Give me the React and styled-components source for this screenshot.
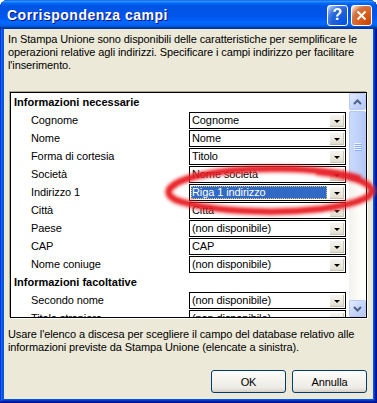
import React from 'react';
import styled, { createGlobalStyle } from 'styled-components';

const GlobalStyle = createGlobalStyle`
  html, body { margin: 0; padding: 0; background: #ffffff; }
  body {
    width: 377px; height: 403px; overflow: hidden;
    font-family: "Liberation Sans", Arial, sans-serif;
    font-size: 11px; color: #000;
  }
  * { box-sizing: border-box; }
`;

const Window = styled.div`
  position: relative;
  width: 377px;
  height: 403px;
  display: flex;
  flex-direction: column;
  border-radius: 8px 8px 0 0;
  overflow: hidden;
  background: #0055e5;
  box-shadow: inset -1px -1px #00138c, inset 1px 1px #0831d9,
    inset -2px -2px #001ea0, inset 2px 2px #166aee,
    inset -3px -3px #003bda, inset 3px 3px #0855dd;
`;

const TitleBar = styled.div`
  height: 29px;
  flex: none;
  display: flex;
  align-items: center;
  padding: 0 5px 0 7px;
  background: linear-gradient(180deg, #0058ee 0%, #3593ff 4%, #288eff 6%, #127dff 8%,
    #036ffc 10%, #0262ee 14%, #0057e5 20%, #0054e3 24%, #0055eb 56%, #005bf5 66%,
    #026afe 76%, #0062ef 86%, #0052d6 92%, #0040ab 94%, #003092 100%);
`;

const Title = styled.div`
  flex: 1;
  color: #fff;
  font-weight: bold;
  font-size: 14px;
  letter-spacing: 0.5px;
  text-shadow: 1px 1px #0f1089;
  padding-top: 1px;
`;

const Controls = styled.div`
  display: flex;
  gap: 3px;
  margin-top: 1px;
`;

const CtlButton = styled.div`
  width: 21px;
  height: 21px;
  border: 1px solid #fff;
  border-radius: 3px;
  display: flex;
  align-items: center;
  justify-content: center;
  color: #fff;
  font-weight: bold;
  font-size: 16px;
  background: ${p => p.$close
    ? 'radial-gradient(circle at 90% 90%, #cc4600 0%, #dc6527 55%, #cd7546 70%, #ffccb2 90%, #fff 100%)'
    : 'radial-gradient(circle at 90% 90%, #0054e9 0%, #2263d5 55%, #4479e4 70%, #a3bbec 90%, #fff 100%)'};
`;

const Body = styled.div`
  flex: 1;
  margin: 0 4px 4px;
  background: #ece9d8;
  display: flex;
  flex-direction: column;
  padding: 4px 4px 6px;
`;

const Para = styled.p`
  margin: 0;
  line-height: 13px;
  letter-spacing: -0.1px;
  white-space: nowrap;
`;

const ListBox = styled.div`
  margin: 20px 2px 0;
  height: 226px;
  flex: none;
  display: flex;
  border: 1px solid #000;
  background: #fff;
  box-shadow: -1px -1px 0 #aca899, 1px 1px 0 #fff;
`;

const ListContent = styled.div`
  flex: 1;
  overflow: hidden;
`;

const Row = styled.div`
  height: 18px;
  display: grid;
  grid-template-columns: 178px 157px;
  align-items: start;
`;

const Label = styled.div`
  grid-column: ${p => (p.$header ? '1 / -1' : 'auto')};
  padding-left: ${p => (p.$header ? 3 : 20)}px;
  font-weight: ${p => (p.$header ? 'bold' : 'normal')};
  line-height: 18px;
  letter-spacing: ${p => (p.$header ? '0' : '-0.1px')};
  white-space: nowrap;
`;

const Combo = styled.div`
  margin-top: 1px;
  height: 17px;
  border: 1px solid #000;
  background: #fff;
  display: flex;
`;

const ComboValue = styled.div`
  flex: 1;
  margin: ${p => (p.$selected ? '1px' : '0')};
  padding-left: ${p => (p.$selected ? 1 : 2)}px;
  line-height: ${p => (p.$selected ? 13 : 15)}px;
  background: ${p => (p.$selected ? '#316ac5' : 'transparent')};
  color: ${p => (p.$selected ? '#fff' : '#000')};
  outline: ${p => (p.$selected ? '1px dotted #e6c66a' : 'none')};
  outline-offset: -1px;
  white-space: nowrap;
  overflow: hidden;
  letter-spacing: -0.1px;
`;

const ComboButton = styled.div`
  width: 15px;
  margin: 1px;
  background: linear-gradient(180deg, #f6f5f0 0%, #ece9de 60%, #dedacb 100%);
  box-shadow: inset 1px 1px #fff, inset -1px -1px #c9c5b5;
  display: flex;
  align-items: flex-end;
  justify-content: center;
  padding-bottom: 4px;
`;

const Arrow = styled.div`
  width: 0;
  height: 0;
  border-left: 3px solid transparent;
  border-right: 3px solid transparent;
  border-top: 3px solid #000;
`;

const ScrollBar = styled.div`
  width: 17px;
  flex: none;
  display: flex;
  flex-direction: column;
  background: linear-gradient(90deg, #f3f1ec 0%, #fefefb 70%);
`;

const ScrollBtn = styled.div`
  height: 17px;
  flex: none;
  border: 1px solid #b9cbf3;
  border-radius: 2px;
  background: linear-gradient(135deg, #e4ecfe 0%, #c6d6fc 50%, #b4c8f6 100%);
  display: flex;
  align-items: center;
  justify-content: center;
`;

const Track = styled.div`
  flex: 1;
  padding-top: 1px;
`;

const Thumb = styled.div`
  height: 70px;
  border: 1px solid #b4c8f6;
  border-radius: 2px;
  background: linear-gradient(90deg, #cad9fd 0%, #c1d3fb 50%, #b4c8f6 100%);
  display: flex;
  flex-direction: column;
  align-items: center;
  justify-content: center;
  gap: 1px;
`;

const Grip = styled.div`
  width: 7px;
  height: 1px;
  background: #eef4fe;
  box-shadow: 1px 1px #8cb0f8;
`;

const FooterText = styled(Para)`
  margin-top: 10px;
`;

const Buttons = styled.div`
  margin-top: auto;
  display: flex;
  justify-content: flex-end;
  gap: 6px;
  padding-right: 2px;
`;

const Button = styled.div`
  width: 75px;
  height: 23px;
  border: 1px solid #003c74;
  border-radius: 3px;
  background: linear-gradient(180deg, #ffffff 0%, #f4f3ee 40%, #ecebe6 80%, #d6d0c5 100%);
  display: flex;
  align-items: center;
  justify-content: center;
  letter-spacing: -0.1px;
`;

const Overlay = styled.svg`
  position: absolute;
  left: 0;
  top: 0;
  pointer-events: none;
`;

const rows = [
  { header: true, label: 'Informazioni necessarie' },
  { label: 'Cognome', value: 'Cognome' },
  { label: 'Nome', value: 'Nome' },
  { label: 'Forma di cortesia', value: 'Titolo' },
  { label: 'Società', value: 'Nome società' },
  { label: 'Indirizzo 1', value: 'Riga 1 indirizzo', selected: true },
  { label: 'Città', value: 'Città' },
  { label: 'Paese', value: '(non disponibile)' },
  { label: 'CAP', value: 'CAP' },
  { label: 'Nome coniuge', value: '(non disponibile)' },
  { header: true, label: 'Informazioni facoltative' },
  { label: 'Secondo nome', value: '(non disponibile)' },
  { label: 'Titolo straniero', value: '(non disponibile)' },
];

const Chevron = ({ up }) => (
  <svg width="9" height="6" viewBox="0 0 9 6">
    <polyline
      points={up ? '1,5 4.5,1.5 8,5' : '1,1 4.5,4.5 8,1'}
      fill="none"
      stroke="#4d6185"
      strokeWidth="2"
    />
  </svg>
);

const ELLIPSE =
  'M358 178 C320 167 245 165 197 176 C172 182 160 192 176 200 C204 210 265 215 320 209 C358 204 378 196 370 187 C364 180 345 175 318 172';

export default function App() {
  return (
    <>
      <GlobalStyle />
      <Window>
        <TitleBar>
          <Title>Corrispondenza campi</Title>
          <Controls>
            <CtlButton>?</CtlButton>
            <CtlButton $close>
              <svg width="11" height="11" viewBox="0 0 11 11">
                <path d="M1.5 1.5 L9.5 9.5 M9.5 1.5 L1.5 9.5" stroke="#fff" strokeWidth="2" />
              </svg>
            </CtlButton>
          </Controls>
        </TitleBar>
        <Body>
          <Para>
            In Stampa Unione sono disponibili delle caratteristiche per semplificare le<br />
            operazioni relative agli indirizzi. Specificare i campi indirizzo per facilitare<br />
            l'inserimento.
          </Para>
          <ListBox>
            <ListContent>
              {rows.map((r, i) => (
                <Row key={i}>
                  <Label $header={r.header}>{r.label}</Label>
                  {!r.header && (
                    <Combo>
                      <ComboValue $selected={r.selected}>{r.value}</ComboValue>
                      <ComboButton>
                        <Arrow />
                      </ComboButton>
                    </Combo>
                  )}
                </Row>
              ))}
            </ListContent>
            <ScrollBar>
              <ScrollBtn>
                <Chevron up />
              </ScrollBtn>
              <Track>
                <Thumb>
                  <Grip />
                  <Grip />
                  <Grip />
                  <Grip />
                </Thumb>
              </Track>
              <ScrollBtn>
                <Chevron />
              </ScrollBtn>
            </ScrollBar>
          </ListBox>
          <FooterText>
            Usare l'elenco a discesa per scegliere il campo del database relativo alle<br />
            informazioni previste da Stampa Unione (elencate a sinistra).
          </FooterText>
          <Buttons>
            <Button>OK</Button>
            <Button>Annulla</Button>
          </Buttons>
        </Body>
        <Overlay width="377" height="403" viewBox="0 0 377 403">
          <defs>
            <filter id="soft" x="-10%" y="-30%" width="120%" height="160%">
              <feGaussianBlur stdDeviation="1.2" />
            </filter>
          </defs>
          <g filter="url(#soft)" fill="none" strokeLinecap="round">
            <path d={ELLIPSE} stroke="rgba(240,60,60,0.4)" strokeWidth="10" />
            <path d={ELLIPSE} stroke="rgba(230,25,30,0.85)" strokeWidth="5.5" />
          </g>
        </Overlay>
      </Window>
    </>
  );
}
